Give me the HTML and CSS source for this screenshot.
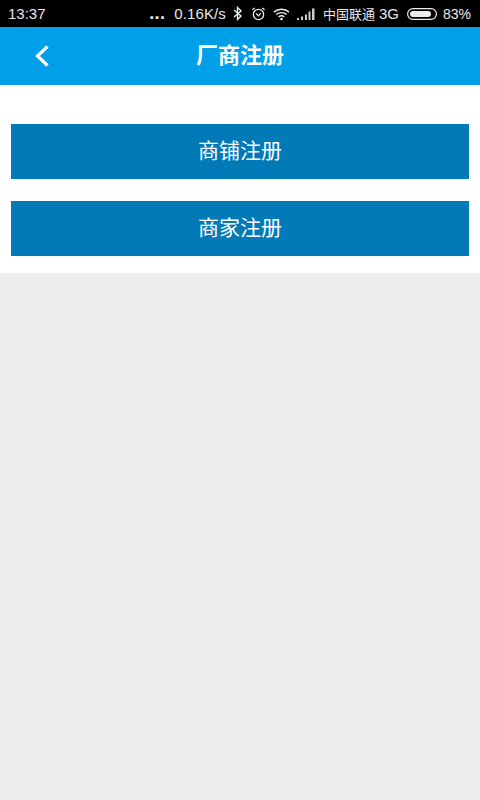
FILE: index.html
```html
<!DOCTYPE html>
<html lang="zh-CN">
<head>
<meta charset="utf-8">
<title>厂商注册</title>
<link rel="stylesheet" href="styles.css">
</head>
<body>
<div class="status">
  <span class="time">13:37</span>
  <div class="status-right">
    <span class="dots">...</span>
    <span class="speed">0.16K/s</span>
    <svg class="ic bt" width="10" height="15" viewBox="0 0 10 15"><path d="M1 4l7 6-3.500 3.500V1.500L8 5l-7 6" fill="none" stroke="#eee" stroke-width="1.400"/></svg>
    <svg class="ic alarm" width="15" height="16" viewBox="0 0 16 16"><circle cx="8" cy="8.500" r="5.500" fill="none" stroke="#eee" stroke-width="1.400"/><path d="M5.500 7.500L8 10l2.500-3M1.500 3.500l2.500-2M14.500 3.500l-2.500-2" fill="none" stroke="#eee" stroke-width="1.300"/></svg>
    <svg class="ic wifi" width="17" height="14" viewBox="0 0 18 14"><path d="M1 5c4.500-4 11.500-4 16 0M3.500 7.500c3-2.600 8-2.600 11 0M6 10c1.700-1.300 4.300-1.300 6 0" fill="none" stroke="#eee" stroke-width="1.500"/><circle cx="9" cy="12.300" r="1.400" fill="#eee"/></svg>
    <svg class="ic signal" width="18" height="12" viewBox="0 0 18 12"><path d="M0 10h2v2H0zM4 8.500h2V12H4zM8 6.500h2V12H8zM11.500 3.500h2V12h-2zM15 .500h2.500V12H15z" fill="#ccc"/></svg>
    <span class="carrier">中国联通</span>
    <span class="net">3G</span>
    <svg class="ic battery" width="30" height="12" viewBox="0 0 30 12"><rect x=".6" y=".6" width="28.800" height="10.800" rx="5.400" fill="none" stroke="#eee" stroke-width="1.200"/><rect x="3" y="3" width="21" height="6" rx="3" fill="#eee"/></svg>
    <span class="pct">83%</span>
  </div>
</div>
<header class="bar">
  <svg class="back" width="18" height="26" viewBox="0 0 18 26"><path d="M14.500 2.500L4.500 12l10 9.500" fill="none" stroke="#fff" stroke-width="3.200"/></svg>
  <h1 class="title">厂商注册</h1>
</header>
<main class="panel">
  <button class="action">商铺注册</button>
  <button class="action">商家注册</button>
</main>
</body>
</html>
```
FILE: styles.css
```css
html, body { margin: 0; height: 100%; }
body {
  width: 480px;
  height: 800px;
  overflow: hidden;
  background: #ededed;
  font-family: "Liberation Sans", sans-serif;
}
.status {
  height: 27px;
  background: #000;
  color: #e8e8e8;
  display: flex;
  align-items: center;
  justify-content: space-between;
  padding: 0 9px 0 8px;
  font-size: 15px;
}
.status-right { display: flex; align-items: center; }
.dots { font-weight: bold; font-size: 18px; line-height: 15px; margin-top: -1px; letter-spacing: .4px; }
.speed { margin-left: 9px; letter-spacing: .1px; }
.ic { display: block; flex: none; }
.bt { margin-left: 7px; }
.alarm { margin-left: 8px; }
.wifi { margin-left: 7px; }
.signal { margin-left: 7px; }
.carrier { margin-left: 8px; font-size: 13px; line-height: 15px; font-family: "Noto Sans CJK SC", sans-serif; }
.net { margin-left: 4px; }
.battery { margin-left: 8px; }
.pct { margin-left: 6px; font-size: 14px; }
.bar {
  height: 58px;
  background: #009fe8;
  position: relative;
  display: flex;
  align-items: center;
  justify-content: center;
}
.back { position: absolute; left: 33px; top: 17px; }
.title {
  margin: 0 0 6px;
  color: #fff;
  font-family: "Noto Sans CJK SC", sans-serif;
  font-size: 22px;
  line-height: 24px;
  font-weight: bold;
}
.panel {
  background: #fff;
  padding: 39px 11px 17px;
  display: flex;
  flex-direction: column;
  gap: 22px;
}
.action {
  height: 55px;
  border: 0;
  padding: 0 0 6px;
  background: #017ab7;
  color: #fff;
  font-family: "Noto Sans CJK SC", sans-serif;
  font-size: 21px;
  line-height: 24px;
}
```
